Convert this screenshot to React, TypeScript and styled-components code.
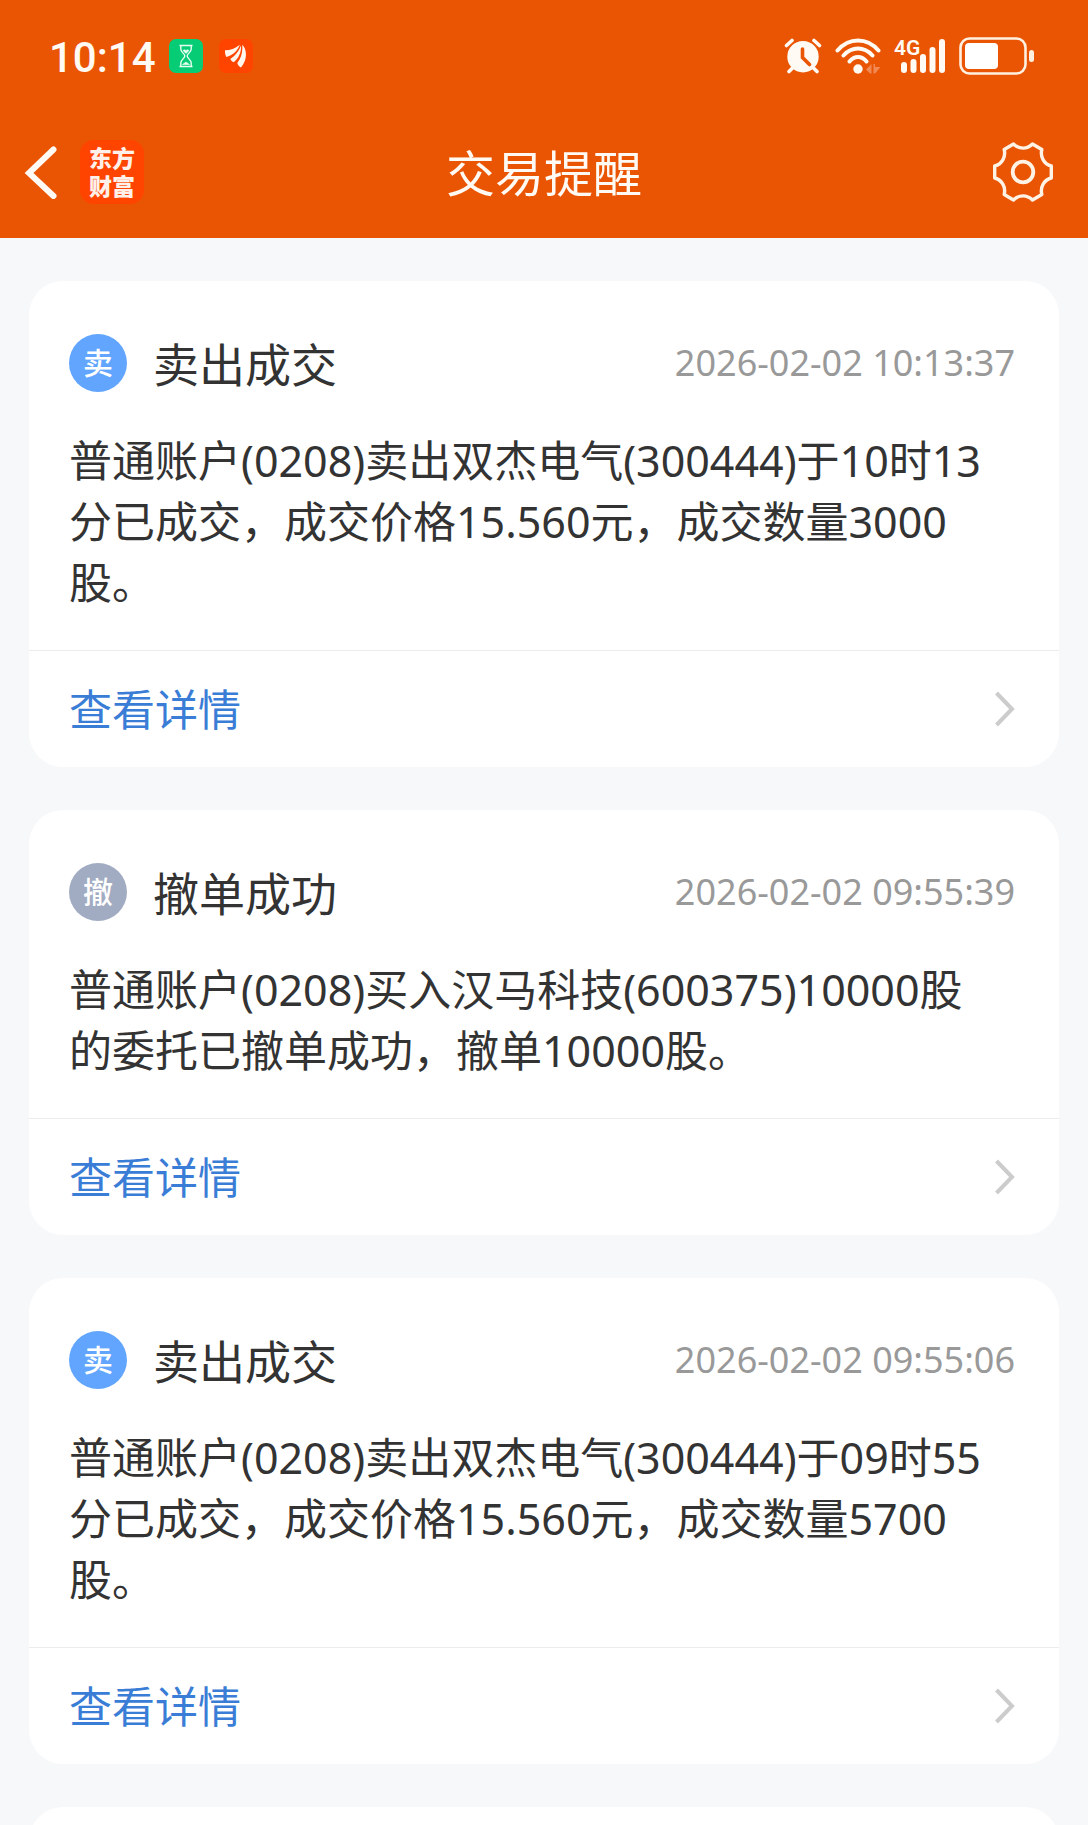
import React from "react";
import styled, { createGlobalStyle } from "styled-components";

const GlobalStyle = createGlobalStyle`
  *, *::before, *::after { box-sizing: border-box; }
  body {
    margin: 0;
    background: #f7f8fa;
    color: #333333;
    font-family: "Noto Sans", "Noto Sans CJK SC", sans-serif;
  }
`;

const Page = styled.div`
  display: flex;
  flex-direction: column;
  height: 100vh;
  overflow: hidden;
`;

const Header = styled.header`
  flex: none;
  padding-bottom: 6px;
  background: #ea5504;
  color: #fffaf3;
`;

const StatusBar = styled.div`
  display: flex;
  align-items: center;
  justify-content: space-between;
  height: 112px;
  padding: 0 54px 0 49px;
`;

const StatusGroup = styled.div<{ $gap: number }>`
  display: flex;
  align-items: center;
  gap: ${(p) => p.$gap}px;
`;

const Clock = styled.time`
  padding-top: 4px;
  font-family: Roboto, sans-serif;
  font-size: 42px;
  font-weight: 500;
  line-height: 48px;
`;

const AppBadge = styled.span<{ $color: string }>`
  display: flex;
  align-items: center;
  justify-content: center;
  width: 34px;
  height: 34px;
  border-radius: 7px;
  background: ${(p) => p.$color};
`;

const NavBar = styled.nav`
  display: grid;
  grid-template-columns: 1fr auto 1fr;
  align-items: center;
  height: 120px;
  padding: 0 24px;
`;

const NavStart = styled.div`
  display: flex;
  align-items: center;
  gap: 22px;
`;

const IconButton = styled.button`
  display: flex;
  padding: 0;
  border: 0;
  background: none;
  color: inherit;
  cursor: pointer;
`;

const SettingsButton = styled(IconButton)`
  justify-self: end;
  margin-right: 11px;
`;

const BrandLogo = styled.a`
  width: 64px;
  height: 64px;
  padding: 3px 9px 0;
  border-radius: 14px;
  background: #ff4400;
  color: #fff1ea;
  font-family: "Noto Sans CJK SC", sans-serif;
  font-size: 23px;
  font-weight: 900;
  line-height: 28px;
  text-decoration: none;
`;

const PageTitle = styled.h1`
  margin: 0;
  padding-top: 2px;
  font-size: 49px;
  font-weight: 400;
  line-height: 60px;
`;

const MessageList = styled.main`
  display: flex;
  flex: 1;
  flex-direction: column;
  gap: 43px;
  min-height: 0;
  padding: 43px 29px 0;
  overflow: hidden;
`;

const Card = styled.article`
  flex: none;
  border-radius: 34px;
  background: #ffffff;
`;

const NextCard = styled(Card)`
  height: 120px;
`;

const CardBody = styled.div`
  padding: 52px 44px 37px 40px;
`;

const CardHead = styled.div`
  display: flex;
  align-items: center;
  height: 59px;
`;

const Tag = styled.span<{ $color: string }>`
  display: flex;
  align-items: center;
  justify-content: center;
  width: 58px;
  height: 58px;
  margin-right: 26px;
  border-radius: 50%;
  background: ${(p) => p.$color};
  color: #ffffff;
  font-size: 30px;
  font-weight: 500;
  line-height: 40px;
`;

const CardTitle = styled.h2`
  flex: 1;
  margin: 0;
  padding-top: 3px;
  font-size: 46px;
  font-weight: 400;
  line-height: 58px;
`;

const Timestamp = styled.time`
  color: #999999;
  font-size: 36px;
  line-height: 48px;
`;

const Message = styled.p`
  margin: 38px 12px 0 0;
  font-size: 43px;
  line-height: 61px;
`;

const DetailLink = styled.a`
  display: flex;
  align-items: center;
  justify-content: space-between;
  height: 117px;
  padding: 0 44px 0 40px;
  border-top: 1px solid #ececec;
  color: #3a7dd6;
  font-size: 43px;
  line-height: 60px;
  text-decoration: none;
`;

const LinkLabel = styled.span`
  padding-top: 2px;
`;

type Notice = {
  kind: "sell" | "cancel";
  title: string;
  time: string;
  text: string;
};

const TAGS = {
  sell: { label: "卖", color: "#62a5ff" },
  cancel: { label: "撤", color: "#a1abc2" },
};

const NOTICES: Notice[] = [
  {
    kind: "sell",
    title: "卖出成交",
    time: "2026-02-02 10:13:37",
    text: "普通账户(0208)卖出双杰电气(300444)于10时13分已成交，成交价格15.560元，成交数量3000股。",
  },
  {
    kind: "cancel",
    title: "撤单成功",
    time: "2026-02-02 09:55:39",
    text: "普通账户(0208)买入汉马科技(600375)10000股的委托已撤单成功，撤单10000股。",
  },
  {
    kind: "sell",
    title: "卖出成交",
    time: "2026-02-02 09:55:06",
    text: "普通账户(0208)卖出双杰电气(300444)于09时55分已成交，成交价格15.560元，成交数量5700股。",
  },
];

const HourglassIcon = () => (
  <svg width="16" height="24" viewBox="0 0 16 24" fill="none" stroke="#e8fff2" strokeWidth="1.4">
    <path d="M1.500 1.500h13M1.500 22.500h13M2.800 1.500v3.500c0 3.500 4 4.500 4 7s-4 3.500-4 7v3.500M13.200 1.500v3.500c0 3.500-4 4.500-4 7s4 3.500 4 7v3.500" />
    <path d="M5 6.500l1.500-.8L8 6.500l1.500-.8 1.500.8L8 9.500zM4.500 20.500L8 18l3.500 2.500z" fill="#e8fff2" strokeWidth=".6" />
  </svg>
);

const WingIcon = () => (
  <svg width="22" height="24" viewBox="0 0 22 24" fill="#fff6ee">
    <path d="M0 6.300C5.500 6.300 10 4.500 14.800.8 13 6.500 7.500 11.500 1.300 13 .2 11 -.2 8.500 0 6.300z" />
    <path d="M16 1.500C16.500 8.500 13.500 14.500 8.700 18.300 7.200 17.800 6 16.600 5.300 15 10.500 11.500 14 7 16 1.500z" />
    <path d="M17.200.8C21.800 4.500 23 15.500 16 23.500 14.200 22.500 12.900 21 12.300 19 16 14 18 8 17.200.8z" />
  </svg>
);

const AlarmIcon = () => (
  <svg width="38" height="36" viewBox="0 0 38 36" fill="none" stroke="#fffaf3" strokeWidth="3.600" strokeLinecap="round">
    <path d="M2.500 7.500l5.500-5M35.500 7.500l-5.500-5" />
    <circle cx="19" cy="18.700" r="16.500" fill="#fffaf3" stroke="#ea5504" strokeWidth="1.600" />
    <path d="M5 33.500l4-4M33 33.500l-4-4" />
    <path d="M18.500 11v8.500l7 7" stroke="#ea5504" />
  </svg>
);

const WifiIcon = () => (
  <svg width="46" height="36" viewBox="0 0 46 36" fill="none" stroke="#fffaf3" strokeWidth="4" strokeLinecap="round">
    <path d="M2.500 12.500C14-.8 32-.8 43.500 12.500M8.500 17.500C17 8.300 29 8.300 37.500 17.500M14.500 23.500C19.500 17.500 26.500 17.500 31.500 23.500" />
    <circle cx="23" cy="31" r="4.700" fill="#fffaf3" stroke="none" />
    <path d="M36.500 26v9.500h-1.500L31 31.500zM38.500 26h1.500v3h5.500l-5.500 6.500h-1.500z" fill="#f28a55" stroke="none" />
  </svg>
);

const SignalIcon = () => (
  <svg width="52" height="52" viewBox="0 -8 52 52" fill="#fffaf3">
    <text x="0" y="17" fontFamily="Roboto, sans-serif" fontSize="21" fontWeight="600">4G</text>
    <rect x="7" y="24" width="6" height="11" rx="3" />
    <rect x="16.500" y="21" width="6" height="14" rx="3" />
    <rect x="26" y="16" width="6" height="19" rx="3" />
    <rect x="35.500" y="9" width="6" height="26" rx="3" />
    <rect x="45" y="1" width="6" height="34" rx="3" />
  </svg>
);

const BatteryIcon = () => (
  <svg width="75" height="38" viewBox="0 0 75 38">
    <rect x="1.500" y="1.500" width="65" height="35" rx="9" fill="none" stroke="#fff0e0" strokeWidth="2.600" />
    <rect x="6" y="6" width="33" height="26" rx="4" fill="#ffffff" />
    <rect x="70" y="13" width="5" height="12" rx="2.500" fill="#fff0e0" />
  </svg>
);

const BackIcon = () => (
  <svg width="34" height="54" viewBox="0 0 34 54" fill="none" stroke="#fffaf3" strokeWidth="6" strokeLinecap="round">
    <path d="M29.500 4.500L5 28 29.500 51" />
  </svg>
);

const GearIcon = () => (
  <svg width="60" height="60" viewBox="0 0 60 60" fill="none" stroke="#fff3e6" strokeWidth="3.400" strokeLinejoin="round">
    <path d="M20.500 2C26 7.500 34 7.500 39.500 2L48.800 7.500C47 15 51 22 58.300 24V36C51 38 47 45 48.800 52.500L39.500 58C34 52.500 26 52.500 20.500 58L11.200 52.500C13 45 9 38 1.700 36V24C9 22 13 15 11.200 7.500Z" />
    <circle cx="30" cy="30" r="10.300" strokeWidth="3.800" />
  </svg>
);

const ChevronIcon = () => (
  <svg width="20" height="36" viewBox="0 0 20 36" fill="none" stroke="#cccccc" strokeWidth="4">
    <path d="M1.500 2L17 18 1.500 34" />
  </svg>
);

function NoticeCard({ notice }: { notice: Notice }) {
  const tag = TAGS[notice.kind];
  return (
    <Card>
      <CardBody>
        <CardHead>
          <Tag $color={tag.color}>{tag.label}</Tag>
          <CardTitle>{notice.title}</CardTitle>
          <Timestamp dateTime={notice.time}>{notice.time}</Timestamp>
        </CardHead>
        <Message>{notice.text}</Message>
      </CardBody>
      <DetailLink href="#detail">
        <LinkLabel>查看详情</LinkLabel>
        <ChevronIcon />
      </DetailLink>
    </Card>
  );
}

export default function App() {
  return (
    <Page lang="zh-CN">
      <GlobalStyle />
      <Header>
        <StatusBar>
          <StatusGroup $gap={13}>
            <Clock>10:14</Clock>
            <StatusGroup $gap={16}>
              <AppBadge $color="#06cc76">
                <HourglassIcon />
              </AppBadge>
              <AppBadge $color="#ff4400">
                <WingIcon />
              </AppBadge>
            </StatusGroup>
          </StatusGroup>
          <StatusGroup $gap={13}>
            <AlarmIcon />
            <WifiIcon />
            <SignalIcon />
            <BatteryIcon />
          </StatusGroup>
        </StatusBar>
        <NavBar>
          <NavStart>
            <IconButton type="button" aria-label="返回">
              <BackIcon />
            </IconButton>
            <BrandLogo href="#home">东方财富</BrandLogo>
          </NavStart>
          <PageTitle>交易提醒</PageTitle>
          <SettingsButton type="button" aria-label="设置">
            <GearIcon />
          </SettingsButton>
        </NavBar>
      </Header>
      <MessageList>
        {NOTICES.map((notice) => (
          <NoticeCard key={notice.time} notice={notice} />
        ))}
        <NextCard />
      </MessageList>
    </Page>
  );
}
